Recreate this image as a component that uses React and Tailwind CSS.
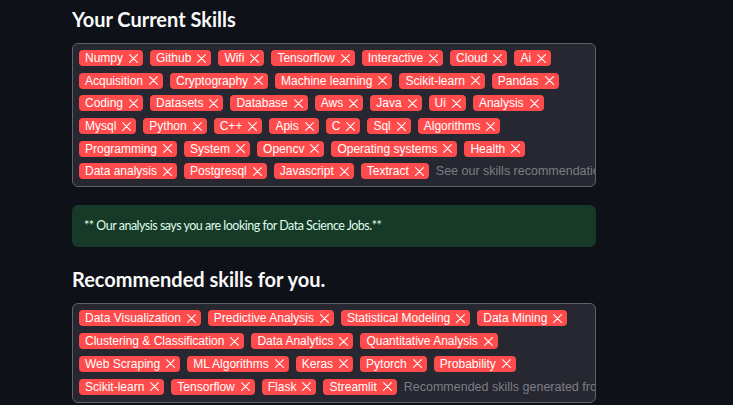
import React from "react";

const currentSkills = [
  "Numpy", "Github", "Wifi", "Tensorflow", "Interactive", "Cloud", "Ai",
  "Acquisition", "Cryptography", "Machine learning", "Scikit-learn", "Pandas",
  "Coding", "Datasets", "Database", "Aws", "Java", "Ui", "Analysis",
  "Mysql", "Python", "C++", "Apis", "C", "Sql", "Algorithms",
  "Programming", "System", "Opencv", "Operating systems", "Health",
  "Data analysis", "Postgresql", "Javascript", "Textract",
];

const recommendedSkills = [
  "Data Visualization", "Predictive Analysis", "Statistical Modeling", "Data Mining",
  "Clustering & Classification", "Data Analytics", "Quantitative Analysis",
  "Web Scraping", "ML Algorithms", "Keras", "Pytorch", "Probability",
  "Scikit-learn", "Tensorflow", "Flask", "Streamlit",
];

export default function App() {
  return (
    <div className="min-h-[405px] w-full bg-[#0e1117] font-['Liberation_Sans',Arial,sans-serif]">
      <div className="ml-[72px] w-[524px] pt-[5px]">
        <Heading>Your Current Skills</Heading>
        <SkillBox skills={currentSkills} placeholder="See our skills recommendation below" className="mt-[10px]" />

        <div className="mt-[18px] flex h-[42px] items-center rounded-md bg-[#173928] px-[12px] font-['Lato',sans-serif] text-[12.5px] tracking-[-0.5px] text-[#dffde9]">
          ** Our analysis says you are looking for Data Science Jobs.**
        </div>

        <Heading className="mt-[18px]">Recommended skills for you.</Heading>
        <SkillBox skills={recommendedSkills} placeholder="Recommended skills generated from System" className="mt-[10px]" />
      </div>
    </div>
  );
}

function Heading({ children, className = "" }) {
  return (
    <h3 className={`font-['Lato',sans-serif] text-[20px] font-bold leading-[28px] text-[#fafafa] ${className}`}>
      {children}
    </h3>
  );
}

function SkillBox({ skills, placeholder, className = "" }) {
  return (
    <div className={`flex flex-wrap gap-x-[7px] gap-y-[6.7px] rounded-md border border-[#60626b] bg-[#262730] pb-[7px] pl-[6px] pr-0 pt-[6px] ${className}`}>
      {skills.map((skill) => (
        <Tag key={skill} label={skill} />
      ))}
      <span className="h-[16px] min-w-[120px] flex-1 basis-0 overflow-hidden whitespace-nowrap text-[12.5px] leading-[16px] text-[#7c7e85]">
        {placeholder}
      </span>
    </div>
  );
}

function Tag({ label }) {
  return (
    <span className="flex h-[16px] items-center gap-[6px] rounded-[4px] bg-[#ff4b4b] pl-[6px] pr-[5px] text-[12px] leading-[16px] text-white">
      {label}
      <svg width="9" height="9" viewBox="0 0 9 9" fill="none" stroke="white" strokeWidth="1.1" strokeLinecap="round">
        <path d="M0.6 0.6L8.4 8.4M8.4 0.6L0.6 8.4" />
      </svg>
    </span>
  );
}
